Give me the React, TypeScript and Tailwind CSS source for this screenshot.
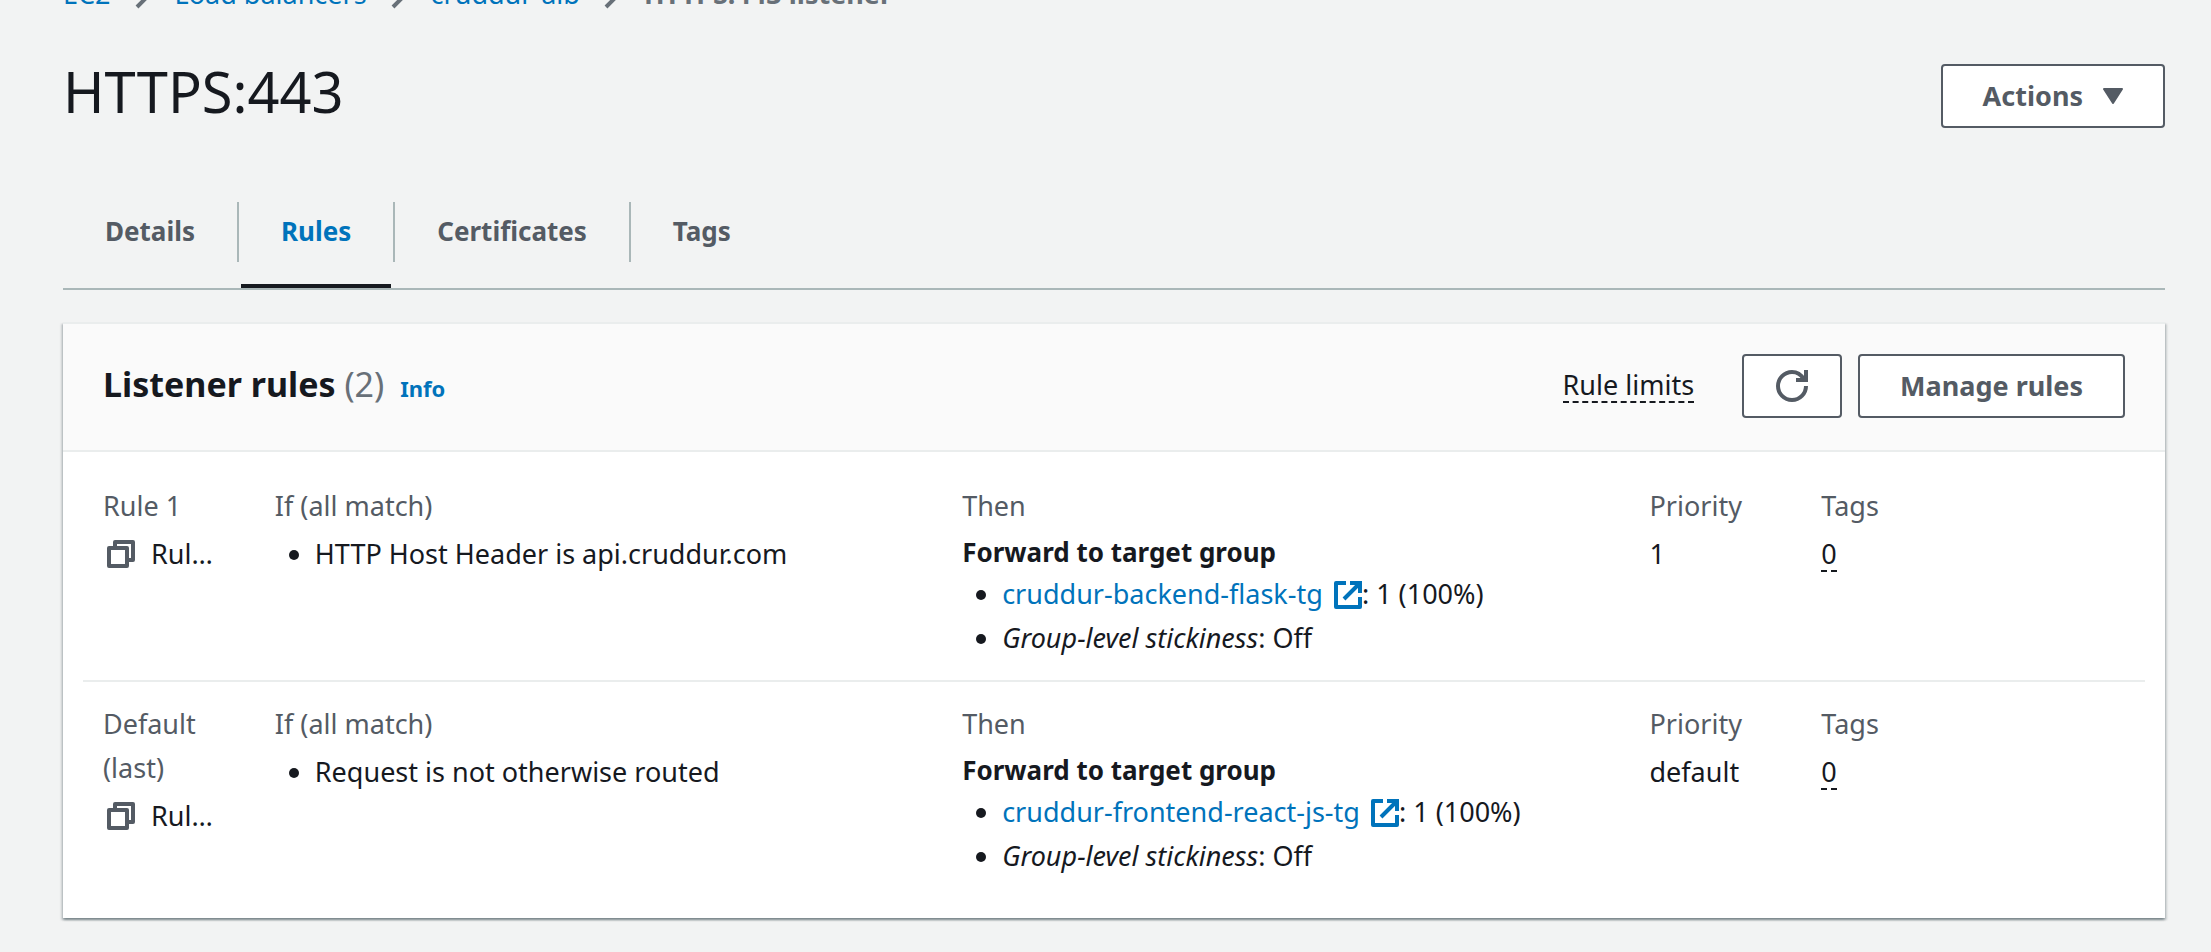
import type { ReactNode } from "react";

function CopyIcon() {
  return (
    <svg viewBox="0 0 28 28" className="size-7 shrink-0" fill="none" stroke="currentColor" strokeWidth="4" strokeLinejoin="round" aria-hidden="true">
      <path d="M2 8h18v18H2z" />
      <path d="M8 7V2h18v18h-5" />
    </svg>
  );
}

function ExternalIcon() {
  return (
    <svg viewBox="0 0 28 28" className="ml-1 inline size-7 align-[-5px]" fill="none" stroke="currentColor" strokeWidth="4" aria-hidden="true">
      <path d="M12 2H2v24h24V16" strokeLinejoin="round" />
      <path d="M16 2h10v10M26 2L10 18" />
    </svg>
  );
}

function RefreshIcon() {
  return (
    <svg viewBox="0 0 32 32" className="size-8" fill="none" stroke="currentColor" strokeWidth="4" aria-hidden="true">
      <path d="M20 10h10V0" />
      <path d="M30 16a14 14 0 1 1-14-14c5 0 9 2.500 11.500 7" />
    </svg>
  );
}

function Separator() {
  return (
    <svg viewBox="0 0 32 32" className="size-8 shrink-0 text-[#687078]" fill="none" stroke="currentColor" strokeWidth="4" aria-hidden="true">
      <path d="M10 3l13 13-13 13" />
    </svg>
  );
}

function Button({ children, label }: { children: ReactNode; label?: string }) {
  return (
    <button
      type="button"
      aria-label={label}
      className={`flex h-16 items-center gap-5 rounded border-2 border-[#545b64] bg-white font-bold text-[#545b64] ${label ? "px-8" : "px-10"}`}
    >
      {children}
    </button>
  );
}

const crumbs = ["EC2", "Load balancers", "cruddur-alb"];
const tabs = ["Details", "Rules", "Certificates", "Tags"];

type Rule = { name: string; condition: string; group: string; priority: string };

const rules: Rule[] = [
  { name: "Rule 1", condition: "HTTP Host Header is api.cruddur.com", group: "cruddur-backend-flask-tg", priority: "1" },
  { name: "Default (last)", condition: "Request is not otherwise routed", group: "cruddur-frontend-react-js-tg", priority: "default" },
];

function Cell({ title, span, children }: { title: string; span: string; children: ReactNode }) {
  return (
    <div className={`min-w-0 px-5 ${span}`}>
      <h3 className="mb-1 text-[#545b64]">{title}</h3>
      {children}
    </div>
  );
}

function RuleRow({ rule }: { rule: Rule }) {
  return (
    <li className="grid grid-cols-12 py-5">
      <Cell title={rule.name} span="col-span-1">
        <div className="flex items-center gap-4 pr-2 pl-1">
          <button type="button" aria-label={`Copy ${rule.name} ARN`} className="text-[#545b64]">
            <CopyIcon />
          </button>
          <span className="truncate">Rule ARN</span>
        </div>
      </Cell>
      <Cell title="If (all match)" span="col-span-4">
        <ul className="list-disc pl-10">
          <li>{rule.condition}</li>
        </ul>
      </Cell>
      <Cell title="Then" span="col-span-4">
        <p className="-mt-0.5 text-[26px] font-bold">Forward to target group</p>
        <ul className="-mt-0.5 list-disc pl-10">
          <li>
            <a href="#target-group" className="text-[#0073bb]">
              {rule.group} <ExternalIcon />
            </a>
            : 1 (100%)
          </li>
          <li>
            <em>Group-level stickiness</em>: Off
          </li>
        </ul>
      </Cell>
      <Cell title="Priority" span="col-span-1">
        <p>{rule.priority}</p>
      </Cell>
      <Cell title="Tags" span="col-span-2">
        <button type="button" className="border-b-2 border-dashed border-[#16191f] leading-8">
          0
        </button>
      </Cell>
    </li>
  );
}

export default function App() {
  return (
    <div className="min-h-screen overflow-hidden bg-[#f2f3f3] pr-[46px] pb-8 pl-[63px] font-['Noto_Sans','Open_Sans',sans-serif] text-[27px] leading-[44px] text-[#16191f]">
      <nav aria-label="Breadcrumb" className="-mt-7">
        <ol className="flex items-center gap-4">
          {crumbs.map((crumb) => (
            <li key={crumb} className="flex items-center gap-4">
              <a href="#crumb" className="text-[#0073bb]">{crumb}</a>
              <Separator />
            </li>
          ))}
          <li className="font-bold text-[#687078]" aria-current="page">HTTPS:443 listener</li>
        </ol>
      </nav>

      <header className="mt-12 flex items-start justify-between">
        <h1 className="text-[56px] leading-[54px]">HTTPS:443</h1>
        <Button>
          Actions
          <svg viewBox="0 0 20 16" className="h-4 w-5" fill="currentColor" stroke="currentColor" strokeWidth="2" strokeLinejoin="round" aria-hidden="true">
            <path d="M1 1h18l-9 14z" />
          </svg>
        </Button>
      </header>

      <div role="tablist" className="mt-[74px] flex h-[88px] items-start border-b-2 border-[#aab7b8] text-[26px]">
        {tabs.map((tab, i) => (
          <div key={tab} className="flex items-start">
            {i > 0 && <span className="h-[60px] w-0.5 bg-[#aab7b8]" />}
            <button
              type="button"
              role="tab"
              aria-selected={tab === "Rules"}
              className={
                tab === "Rules"
                  ? "mx-0.5 h-[86px] border-b-4 border-[#16191f] px-10 pb-6 font-bold text-[#0073bb]"
                  : "h-[86px] px-[42px] pb-7 font-bold text-[#545b64]"
              }
            >
              {tab}
            </button>
          </div>
        ))}
      </div>

      <section className="mt-8 border-t-2 border-[#eaeded] bg-white shadow-[0_2px_2px_0_rgba(0,28,36,0.3),2px_2px_2px_0_rgba(0,28,36,0.15),-2px_2px_2px_0_rgba(0,28,36,0.15)]">
        <div className="flex h-32 items-center justify-between border-b-2 border-[#eaeded] bg-[#fafafa] px-10 pb-0.5">
          <div className="flex items-baseline">
            <h2 className="text-[34px] font-bold">
              Listener rules <span className="font-normal text-[#687078]">(2)</span>
            </h2>
            <a href="#info" className="ml-4 text-[22px] font-bold text-[#0073bb]">Info</a>
          </div>
          <div className="flex items-center">
            <button type="button" className="mr-12 border-b-2 border-dashed border-[#16191f] leading-8">Rule limits</button>
            <div className="flex gap-4">
              <Button label="Refresh"><RefreshIcon /></Button>
              <Button>Manage rules</Button>
            </div>
          </div>
        </div>
        <ul className="divide-y-2 divide-[#eaeded] px-5 pt-3 pb-5">
          {rules.map((rule) => (
            <RuleRow key={rule.name} rule={rule} />
          ))}
        </ul>
      </section>
    </div>
  );
}
